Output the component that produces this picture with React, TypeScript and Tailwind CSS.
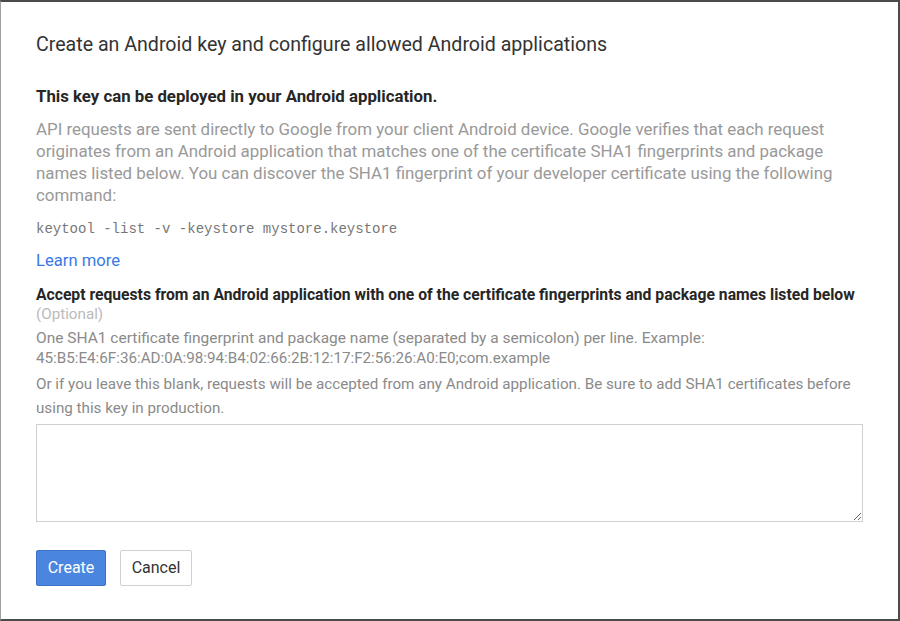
import React from "react";

export default function App() {
  return (
    <div className="w-[900px] h-[621px] bg-white border-t-2 border-b-2 border-r-2 border-l border-[#4a4a4a] border-l-[#a0a0a0] pl-[35px] pr-[35px] pt-[29px] font-['Roboto',sans-serif] overflow-hidden">
      {/* Title */}
      <h1 className="text-[19.6px] leading-[28px] text-[#333]">
        Create an Android key and configure allowed Android applications
      </h1>

      <h2 className="mt-[26px] text-[16.8px] leading-[22px] font-bold text-[#262626] whitespace-nowrap">
        This key can be deployed in your Android application.
      </h2>

      <p className="mt-[11px] text-[16.9px] leading-[22px] text-[#999] whitespace-nowrap">
        API requests are sent directly to Google from your client Android device. Google verifies that each request
        <br />
        originates from an Android application that matches one of the certificate SHA1 fingerprints and package
        <br />
        names listed below. You can discover the SHA1 fingerprint of your developer certificate using the following
        <br />
        command:
      </p>

      <div className="mt-[12px] text-[14px] leading-[22px] text-[#777] font-['Liberation_Mono',monospace]">
        keytool -list -v -keystore mystore.keystore
      </div>

      <a className="block mt-[10px] text-[16.6px] leading-[22px] text-[#3b78e7] cursor-pointer">Learn more</a>

      {/* Fingerprints field */}
      <div className="mt-[13px] text-[15.7px] leading-[20px] font-bold text-[#262626] whitespace-nowrap">
        Accept requests from an Android application with one of the certificate fingerprints and package names listed below
      </div>
      <div className="text-[15.2px] leading-[19px] text-[#bbb]">(Optional)</div>
      <div className="mt-[4px] leading-[20px] text-[#8a8a8a] whitespace-nowrap">
        <div className="text-[15.5px]">
          One SHA1 certificate fingerprint and package name (separated by a semicolon) per line. Example:
        </div>
        <div className="text-[15.2px]">45:B5:E4:6F:36:AD:0A:98:94:B4:02:66:2B:12:17:F2:56:26:A0:E0;com.example</div>
      </div>
      <div className="mt-[4px] text-[15.2px] leading-[24px] text-[#8a8a8a] whitespace-nowrap">
        Or if you leave this blank, requests will be accepted from any Android application. Be sure to add SHA1 certificates before
        <br />
        using this key in production.
      </div>

      <textarea className="block mt-[4px] w-full h-[98px] border border-[#d0d0d0] outline-none resize" />

      <div className="mt-[28px] flex gap-[14px]">
        <button className="h-[36px] w-[70px] rounded-[2px] bg-[#4a86e0] text-white text-[16px] border border-[#3b73c8]">
          Create
        </button>
        <button className="h-[36px] w-[72px] rounded-[2px] bg-white text-[#333] text-[16px] border border-[#d0d0d0]">
          Cancel
        </button>
      </div>
    </div>
  );
}
